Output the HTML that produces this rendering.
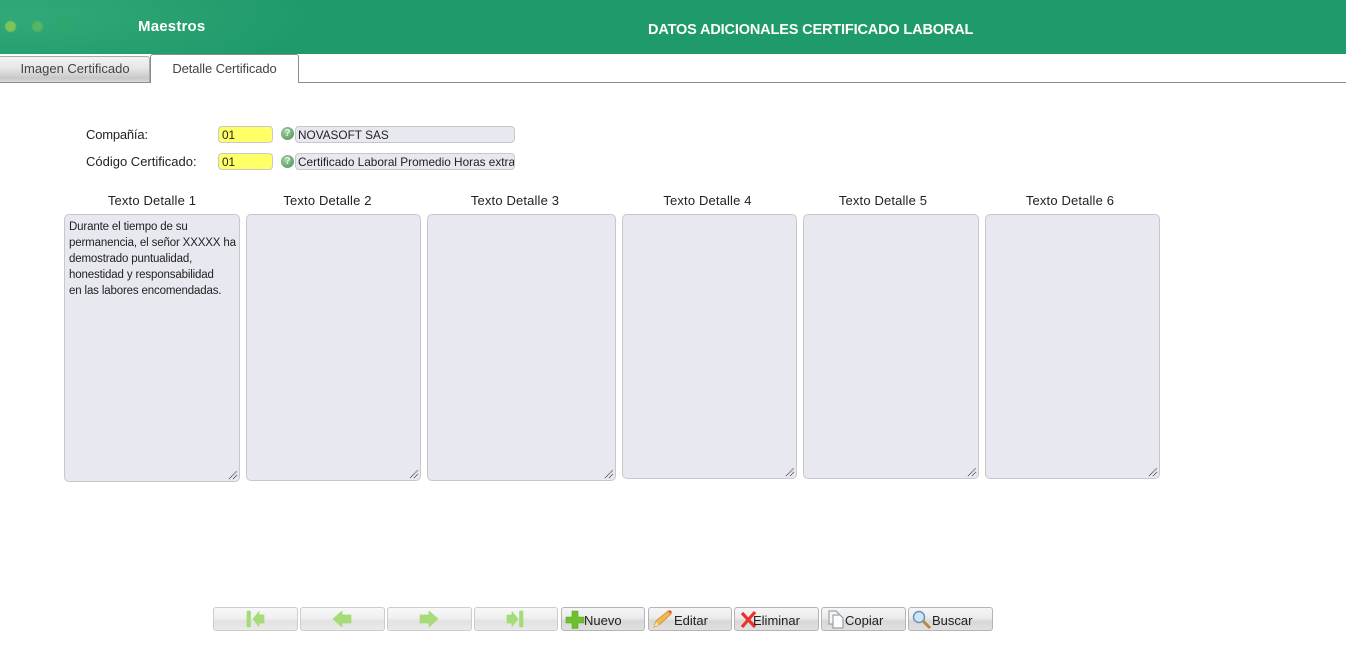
<!DOCTYPE html>
<html><head><meta charset="utf-8">
<style>
html,body{margin:0;padding:0;background:#fff;width:1346px;height:646px;overflow:hidden}
body{font-family:"Liberation Sans",sans-serif;color:#222;position:relative}
.a{position:absolute;white-space:nowrap}
#hdr{left:0;top:0;width:1346px;height:54px;background:#1f9a6a}
#glow{left:0;top:0;width:420px;height:54px;background:radial-gradient(ellipse 300px 70px at 15px 15px,rgba(90,200,150,.32),rgba(31,154,106,0) 100%)}
.dot{border-radius:50%;width:11px;height:11px;top:21px;filter:blur(.5px)}
.tab{font-size:13px;text-align:center;box-sizing:border-box;color:#444}
#t1{left:-2px;top:56px;width:152px;height:27px;line-height:24px;border:1px solid #aaa;border-radius:3px 3px 0 0;background:linear-gradient(#f4f4f4,#e6e6e6 45%,#c8c8c8 85%,#dadada);padding-left:2px}
#t2{left:150px;top:54px;width:149px;height:29px;line-height:28px;border:1px solid #8c8c8c;border-bottom:none;border-radius:3px 3px 0 0;background:#fff;z-index:2;letter-spacing:-.1px}
#ln{left:0;top:82px;width:1346px;height:1px;background:#8c8c8c}
.lb{font-size:13px;color:#222}
.inp{box-sizing:border-box;border:1px solid #c8c8c8;border-radius:4px;font-size:11.8px;line-height:16px;padding-left:2px;color:#222;overflow:hidden}
.y{background:#ffff66;left:218px;width:55px;height:17px;padding-left:3px}
.g{background:#e8e8f0;left:295px;width:220px;height:17px}
.q{left:281px;width:13px;height:13px;border-radius:50%;background:radial-gradient(circle at 40% 35%,#a9d6a0,#5f9f6a 70%,#cfe3cc);color:#e8f4e8;font-size:10px;font-weight:bold;text-align:center;line-height:13px}
.th{font-size:13px;letter-spacing:.15px;text-align:center;top:193px;color:#222}
.ta{box-sizing:border-box;background:#e8e8f0;border:1px solid #c8c8cc;border-radius:5px;top:214px}
.ta svg{position:absolute;right:1px;bottom:1px}
#txt{left:4px;top:4px;font-size:11.5px;line-height:16px;letter-spacing:-.15px;color:#222}
.b{box-sizing:border-box;top:607px;height:24px;border:1px solid #b4b4b4;border-radius:3px;background:linear-gradient(#f6f6f6,#ebebeb 45%,#d8d8d8 60%,#e0e0e0)}
.b.d{border-color:#cccccc;background:linear-gradient(#f8f8f8,#f0f0f0 45%,#e2e2e2 60%,#eaeaea)}
.b svg{position:absolute;left:0;top:0}
.b.d svg{stroke:#a5dc78;stroke-width:.7;stroke-linejoin:round}
.b span{position:absolute;top:1px;line-height:23px;font-size:13px;color:#222}
</style></head><body>
<div class="a" id="hdr"></div><div class="a" id="glow"></div>
<div class="a dot" style="left:5px;background:#7cc35a"></div>
<div class="a dot" style="left:32px;background:#55b465"></div>
<div class="a dot" style="left:59px;background:#2fa76c"></div>
<div class="a" style="left:138px;top:18px;font-size:15px;font-weight:bold;color:#fff;letter-spacing:.2px">Maestros</div>
<div class="a" style="left:648px;top:22px;font-size:14.5px;font-weight:bold;color:#fff;letter-spacing:-.15px">DATOS ADICIONALES CERTIFICADO LABORAL</div>

<div class="a tab" id="t1">Imagen Certificado</div>
<div class="a tab" id="t2">Detalle Certificado</div>
<div class="a" id="ln"></div>

<div class="a lb" style="left:86px;top:127px;letter-spacing:-.2px">Compañía:</div>
<div class="a lb" style="left:86px;top:154px">Código Certificado:</div>
<div class="a inp y" style="top:126px;line-height:17px">01</div>
<div class="a inp y" style="top:153px;line-height:17px">01</div>
<div class="a q" style="top:127px">?</div>
<div class="a q" style="top:155px">?</div>
<div class="a inp g" style="top:126px">NOVASOFT SAS</div>
<div class="a inp g" style="top:153px;line-height:17px">Certificado Laboral Promedio Horas extra</div>

<div class="a th" style="left:64px;width:176px">Texto Detalle 1</div>
<div class="a th" style="left:246px;width:163px">Texto Detalle 2</div>
<div class="a th" style="left:427px;width:176px">Texto Detalle 3</div>
<div class="a th" style="left:622px;width:171px">Texto Detalle 4</div>
<div class="a th" style="left:803px;width:160px">Texto Detalle 5</div>
<div class="a th" style="left:985px;width:170px">Texto Detalle 6</div>

<div class="a ta" style="left:64px;width:176px;height:268px"><div class="a" id="txt">Durante el tiempo de su<br>permanencia, el señor XXXXX ha<br>demostrado puntualidad,<br>honestidad y responsabilidad<br>en las labores encomendadas.</div><svg width="10" height="10"><path d="M1 9L9 1M5 9L9 5" stroke="#444" stroke-dasharray="1 .6" fill="none"/></svg></div>
<div class="a ta" style="left:246px;width:175px;height:267px"><svg width="10" height="10"><path d="M1 9L9 1M5 9L9 5" stroke="#444" stroke-dasharray="1 .6" fill="none"/></svg></div>
<div class="a ta" style="left:427px;width:189px;height:267px"><svg width="10" height="10"><path d="M1 9L9 1M5 9L9 5" stroke="#444" stroke-dasharray="1 .6" fill="none"/></svg></div>
<div class="a ta" style="left:622px;width:175px;height:265px"><svg width="10" height="10"><path d="M1 9L9 1M5 9L9 5" stroke="#444" stroke-dasharray="1 .6" fill="none"/></svg></div>
<div class="a ta" style="left:803px;width:176px;height:265px"><svg width="10" height="10"><path d="M1 9L9 1M5 9L9 5" stroke="#444" stroke-dasharray="1 .6" fill="none"/></svg></div>
<div class="a ta" style="left:985px;width:175px;height:265px"><svg width="10" height="10"><path d="M1 9L9 1M5 9L9 5" stroke="#444" stroke-dasharray="1 .6" fill="none"/></svg></div>

<div class="a b d" style="left:213px;width:85px"><svg width="83" height="22" fill="#a5dc78"><rect x="33" y="3" width="3.5" height="16" rx="1"/><path d="M39 11L45 3.5V7H50V15H45V18.5Z"/></svg></div>
<div class="a b d" style="left:300px;width:85px"><svg width="83" height="22" fill="#a5dc78"><path d="M32 11L41 3V7H50V15H41V19Z"/></svg></div>
<div class="a b d" style="left:387px;width:85px"><svg width="83" height="22" fill="#a5dc78"><path d="M50 11L41 3V7H32V15H41V19Z"/></svg></div>
<div class="a b d" style="left:474px;width:84px"><svg width="82" height="22" fill="#a5dc78"><path d="M43 11L37 3.5V7H32V15H37V18.5Z"/><rect x="44.5" y="3" width="3.5" height="16" rx="1"/></svg></div>

<div class="a b" style="left:561px;width:84px"><svg width="30" height="22"><path d="M10 3H16V9H22V15H16V20.5H10V15H4V9H10Z" fill="#6cbf2e" stroke="#5aa824" stroke-width=".6" stroke-linejoin="round"/></svg><span style="left:22px">Nuevo</span></div>
<div class="a b" style="left:648px;width:84px"><svg width="30" height="22"><path d="M5 19L7 13L19 3L22 6L10 17Z" fill="#f2b84b" stroke="#c98a2a" stroke-width=".8"/><path d="M19 3L22 6L23 4L21 2Z" fill="#e2574c"/><path d="M5 19L7 14L10 17Z" fill="#f5dfb8"/></svg><span style="left:25px">Editar</span></div>
<div class="a b" style="left:734px;width:85px"><svg width="30" height="22"><path d="M7 5L20 19M20 4L7 19" stroke="#e8322a" stroke-width="3.2" fill="none"/></svg><span style="left:18px">Eliminar</span></div>
<div class="a b" style="left:821px;width:85px"><svg width="30" height="22"><path d="M7 3H14L17 6V16H7Z" fill="#f4f6f8" stroke="#8a9098"/><path d="M11 7H18L21 10V20H11Z" fill="#fbfcfd" stroke="#8a9098"/></svg><span style="left:23px">Copiar</span></div>
<div class="a b" style="left:908px;width:85px"><svg width="30" height="22"><path d="M14 13L21 20" stroke="#b98a3c" stroke-width="3"/><circle cx="10" cy="9" r="5.5" fill="#cfe6f8" stroke="#6a93b8" stroke-width="1.5"/></svg><span style="left:23px">Buscar</span></div>
</body></html>
